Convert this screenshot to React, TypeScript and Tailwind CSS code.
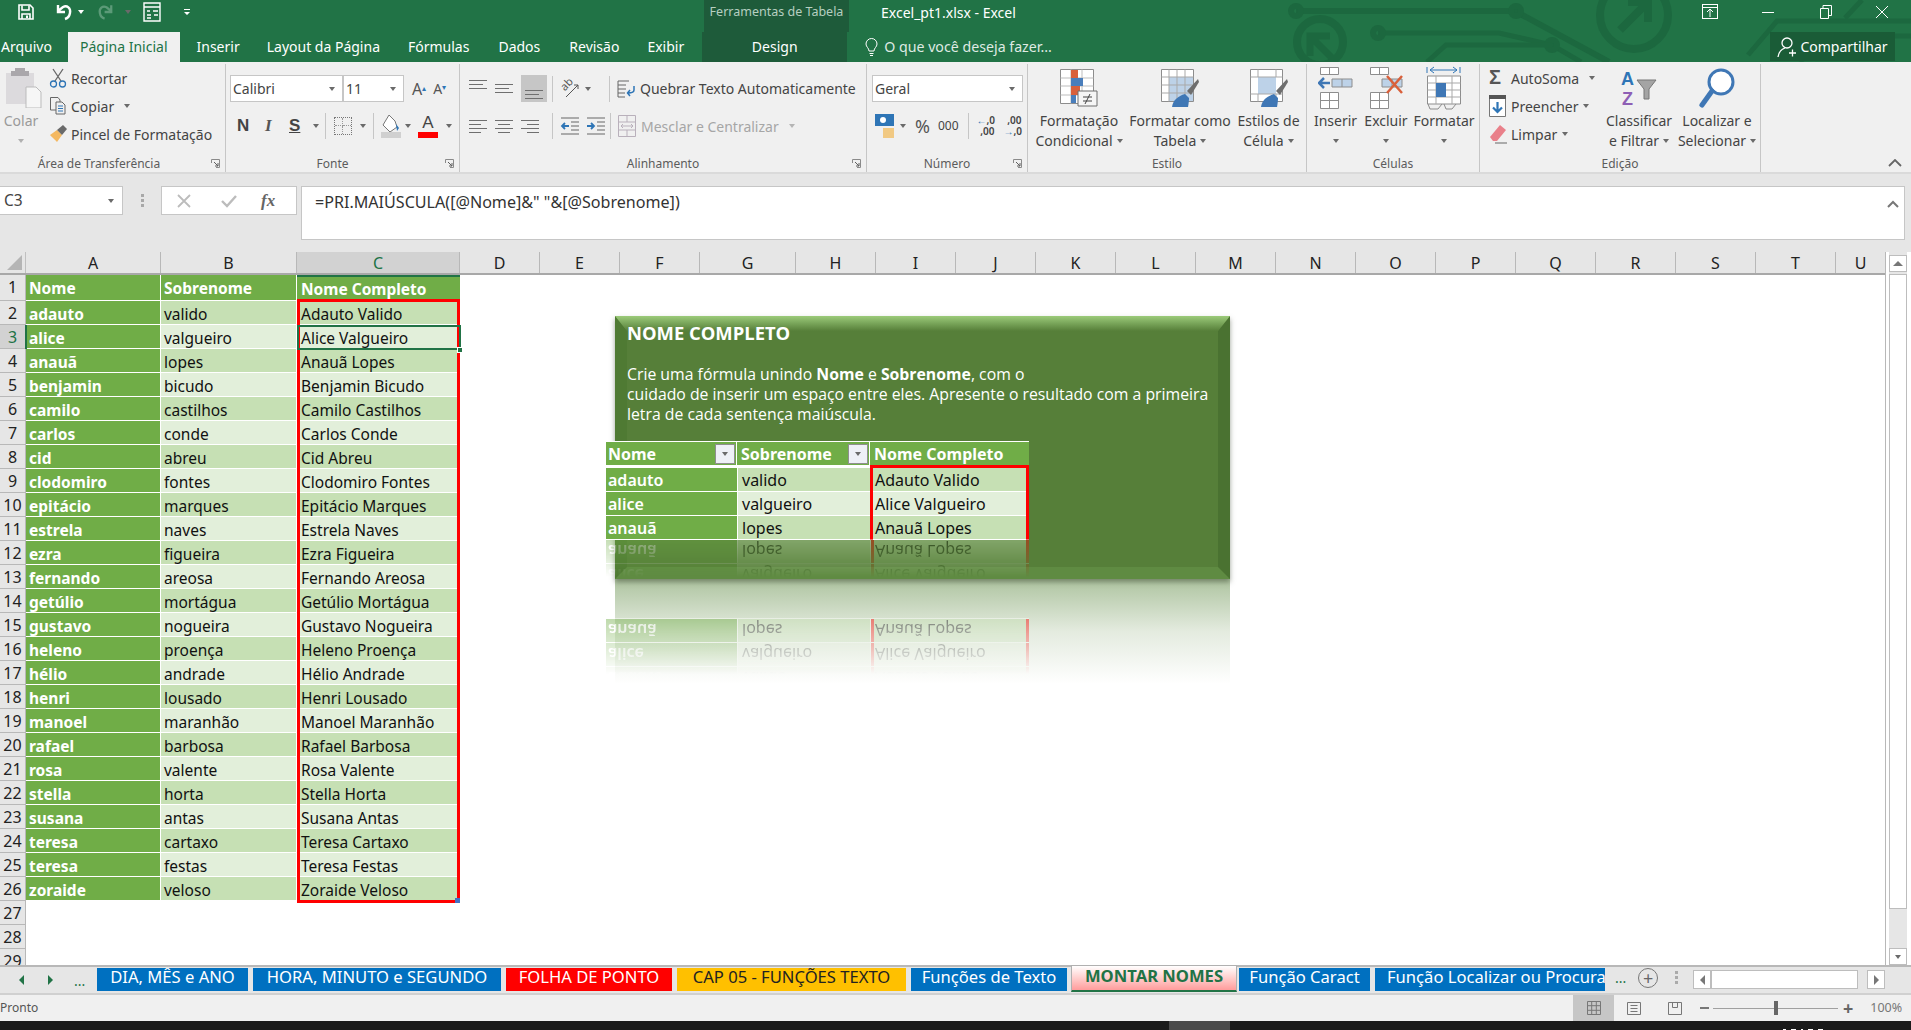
import { ReactNode } from "react";

const people = [
  ["adauto", "valido", "Adauto Valido"],
  ["alice", "valgueiro", "Alice Valgueiro"],
  ["anauã", "lopes", "Anauã Lopes"],
  ["benjamin", "bicudo", "Benjamin Bicudo"],
  ["camilo", "castilhos", "Camilo Castilhos"],
  ["carlos", "conde", "Carlos Conde"],
  ["cid", "abreu", "Cid Abreu"],
  ["clodomiro", "fontes", "Clodomiro Fontes"],
  ["epitácio", "marques", "Epitácio Marques"],
  ["estrela", "naves", "Estrela Naves"],
  ["ezra", "figueira", "Ezra Figueira"],
  ["fernando", "areosa", "Fernando Areosa"],
  ["getúlio", "mortágua", "Getúlio Mortágua"],
  ["gustavo", "nogueira", "Gustavo Nogueira"],
  ["heleno", "proença", "Heleno Proença"],
  ["hélio", "andrade", "Hélio Andrade"],
  ["henri", "lousado", "Henri Lousado"],
  ["manoel", "maranhão", "Manoel Maranhão"],
  ["rafael", "barbosa", "Rafael Barbosa"],
  ["rosa", "valente", "Rosa Valente"],
  ["stella", "horta", "Stella Horta"],
  ["susana", "antas", "Susana Antas"],
  ["teresa", "cartaxo", "Teresa Cartaxo"],
  ["teresa", "festas", "Teresa Festas"],
  ["zoraide", "veloso", "Zoraide Veloso"],
];

const columns: [string, number][] = [
  ["A", 135], ["B", 136], ["C", 163], ["D", 80], ["E", 80], ["F", 80], ["G", 96], ["H", 80], ["I", 80], ["J", 80], ["K", 80],
  ["L", 80], ["M", 80], ["N", 80], ["O", 80], ["P", 80], ["Q", 80], ["R", 80], ["S", 80], ["T", 80], ["U", 50],
];

function Caret({ className = "" }: { className?: string }) {
  return <span className={`inline-block w-0 h-0 border-l-[3.5px] border-r-[3.5px] border-t-[4px] border-l-transparent border-r-transparent border-t-[#6a6a6a] ${className}`} />;
}

function Sep({ className = "" }: { className?: string }) {
  return <div className={`w-px h-[26px] bg-[#c6c6c6] ${className}`} />;
}

function Launcher() {
  return (
    <svg width="9" height="9" viewBox="0 0 9 9" className="absolute right-[5px] bottom-[4px]">
      <path d="M.5 4V.5H8.5V8.5H5" fill="none" stroke="#8a8a8a" />
      <path d="M3 3 7 7M4 7H7V4" fill="none" stroke="#5e5e5e" />
    </svg>
  );
}

function Group({ label, width, labelClass = "", children }: { label: string; width: number; labelClass?: string; children: ReactNode }) {
  return (
    <div className="relative h-[108px] border-r border-[#c6c6c6] flex flex-col shrink-0" style={{ width }}>
      <div className="flex-1 min-h-0">{children}</div>
      <div className={`h-[18px] text-center text-[12px] leading-[20px] text-[#5c5c5c] ${labelClass}`}>{label}</div>
      {label !== "Estilo" && label !== "Células" && label !== "Edição" && <Launcher />}
    </div>
  );
}

function BigButton({ width, icon, lines }: { width: number; icon: ReactNode; lines: string[] }) {
  return (
    <div className="flex flex-col items-center text-[14px] leading-[20px] text-[#444] shrink-0 whitespace-nowrap" style={{ width }}>
      <div className="h-[47px] flex items-center justify-center">{icon}</div>
      <div className="h-[20px]">{lines[0]}</div>
      <div className="h-[20px] flex items-center justify-center gap-[4px]">
        {lines[1]}
        <Caret />
      </div>
    </div>
  );
}

function TabButton({ children, className = "px-[14px] text-white" }: { children: ReactNode; className?: string }) {
  return <div className={`h-[30px] leading-[29px] text-[14px] whitespace-nowrap ${className}`}>{children}</div>;
}

function Circuit() {
  return (
    <svg width="641" height="62" viewBox="0 0 641 62" className="absolute left-[1270px] top-0" fill="none" stroke="#1c683f" strokeWidth="6">
      <path d="M26 11H245L339 62" />
      <circle cx="26" cy="11" r="5" />
      <circle cx="246" cy="11" r="5" />
      <path d="M108 33H229L282 45 311 62" strokeWidth="5" />
      <circle cx="108" cy="33" r="5" />
      <circle cx="282" cy="45" r="5" />
      <path d="M157 62 176 45H282" strokeWidth="5" />
      <circle cx="364" cy="15" r="34" strokeWidth="8" />
      <path d="M350 30 378 2M358 2H378V22" strokeWidth="8" />
      <circle cx="50" cy="42" r="23" strokeWidth="8" />
      <path d="M66 62 42 38M40 56V36H60" strokeWidth="7" />
      <path d="M478 55 507 21H641M530 62 552 36H641M575 18 592 0" strokeWidth="5" />
    </svg>
  );
}

function TitleBar() {
  return (
    <div className="relative h-[62px] bg-[#217346] overflow-hidden text-white">
      <Circuit />
      <div className="relative h-[32px] flex items-center pb-[8px]">
        <div className="flex items-center pl-[18px] w-[704px]">
          <svg width="16" height="16" viewBox="0 0 16 16" fill="none" stroke="#fff" strokeWidth="1.6">
            <path d="M1 1H12L15 4V15H1Z" />
            <path d="M4 1.5V6H11V1.5M4 15V10H12V15" />
            <path d="M9 11.5V14" strokeWidth="2" />
          </svg>
          <svg width="20" height="18" viewBox="0 0 20 18" fill="none" stroke="#fff" strokeWidth="2.4" className="ml-[19px]">
            <path d="M5 2V9H12M5 8 10 4C14 2 18 5 17 10 16.500 13 15 15 12 16" />
          </svg>
          <Caret className="ml-[5px] border-t-white" />
          <svg width="19" height="18" viewBox="0 0 20 18" fill="none" stroke="#5c9a78" strokeWidth="2.4" className="ml-[13px]">
            <path d="M15 2V9H8M15 8 10 4C6 2 2 5 3 10 3.500 13 5 15 8 16" />
          </svg>
          <Caret className="ml-[9px] border-t-[#5c9a78]" />
          <svg width="18" height="20" viewBox="0 0 18 20" fill="none" stroke="#fff" strokeWidth="1.400" className="ml-[12px]">
            <path d="M1 1H17V19H1Z" />
            <path d="M1 5H17M4 9H7M10 9H15M4 13H8M11 13H15M4 16H8" />
          </svg>
          <svg width="8" height="8" viewBox="0 0 8 8" fill="#fff" className="ml-[22px]">
            <path d="M1 1H7V2H1ZM1 4H7L4 7Z" />
          </svg>
        </div>
        <div className="w-[145px] self-stretch -mb-[8px] bg-[#1e5b3a] text-center text-[12.500px] leading-[24px] text-[#b6cfc0] whitespace-nowrap">Ferramentas de Tabela</div>
        <div className="ml-[32px] text-[14px] whitespace-nowrap">Excel_pt1.xlsx - Excel</div>
        <div className="absolute left-[1702px] top-[4px] w-[16px] h-[15px] border border-white flex flex-col items-center">
          <div className="w-full h-[3px] border-b border-white" />
          <svg width="8" height="9" viewBox="0 0 8 9" fill="none" stroke="#fff"><path d="M4 9V1M1 4 4 1 7 4" /></svg>
        </div>
        <div className="absolute left-[1762px] top-[12px] w-[12px] h-px bg-white" />
        <svg width="12" height="14" viewBox="0 0 12 14" fill="none" stroke="#fff" className="absolute left-[1820px] top-[5px]">
          <path d="M.5 3.500H8.500V13.500H.5ZM3 3V.5H11.500V10.500H9" />
        </svg>
        <svg width="14" height="14" viewBox="0 0 14 14" stroke="#fff" className="absolute left-[1875px] top-[5px]"><path d="M1 1 13 13M13 1 1 13" /></svg>
      </div>
      <div className="relative h-[30px] flex items-end">
        <div className="text-[14px] leading-[29px] h-[30px] pl-[1px] w-[68px]">Arquivo</div>
        <TabButton className="px-[12px] mr-[4px] bg-[#f0f0f0] text-[#217346]">Página Inicial</TabButton>
        <TabButton className="px-[13px] text-white">Inserir</TabButton>
        <TabButton>Layout da Página</TabButton>
        <TabButton>Fórmulas</TabButton>
        <TabButton className="px-[15px] text-white">Dados</TabButton>
        <TabButton>Revisão</TabButton>
        <TabButton>Exibir</TabButton>
        <div className="ml-[4px] w-[145px] h-[30px] bg-[#1e5b3a] text-center text-[14px] leading-[29px]">Design</div>
        <div className="ml-[18px] h-[30px] flex items-center gap-[6px] text-[14.200px] text-[#dfeae3]">
          <svg width="13" height="19" viewBox="0 0 13 19" fill="none" stroke="#fff"><path d="M4 13C4 10 1 9 1 6A5.500 5.500 0 0 1 12 6C12 9 9 10 9 13ZM4.500 15.500H8.500M5 17.500H8" /></svg>
          O que você deseja fazer...
        </div>
        <div className="absolute left-[1770px] top-0 w-[125px] h-[29px] bg-[#1a5c37] flex items-center justify-center gap-[3px] text-[14px]">
          <svg width="20" height="22" viewBox="0 0 20 22" fill="none" stroke="#fff" strokeWidth="1.300"><circle cx="10" cy="7" r="5" /><path d="M1 21C2 15 5 13 8 12M12 17H19M15.500 13.500V20.500" /></svg>
          Compartilhar
        </div>
      </div>
    </div>
  );
}

function ClipboardGroup() {
  return (
    <Group label="Área de Transferência" width={226} labelClass="pr-[27px]">
      <div className="flex h-full text-[14px] text-[#444]">
        <div className="w-[46px] flex flex-col items-center pl-[2px] text-[#9a9a9a]">
          <svg width="36" height="40" viewBox="0 0 36 40" className="mt-[4px]">
            <path d="M0 5H28V36H0Z" fill="#dcdadd" />
            <path d="M9 0H19V3H23V8H5V3H9Z" fill="#aaa7ab" />
            <path d="M20 19H30L35 24V40H20Z" fill="#f6f6f6" stroke="#bbb" />
          </svg>
          <div className="h-[20px] mt-[3px] leading-[20px] -ml-[6px]">Colar</div>
          <Caret className="mt-[8px] border-t-[#b0b0b0] -ml-[6px]" />
        </div>
        <div className="flex flex-col">
          {["Recortar", "Copiar", "Pincel de Formatação"].map((t, i) => (
            <div key={t} className="h-[28px] flex items-center whitespace-nowrap ml-[3px]">
              {i === 0 && (
                <svg width="18" height="20" viewBox="0 0 18 20" fill="none" stroke="#666" strokeWidth="1.300">
                  <path d="M4 1 12 13M14 1 6 13" />
                  <circle cx="4.500" cy="16" r="3" stroke="#2e75b6" />
                  <circle cx="13.500" cy="16" r="3" stroke="#2e75b6" />
                </svg>
              )}
              {i === 1 && (
                <svg width="18" height="20" viewBox="0 0 18 20" fill="none" stroke="#666">
                  <path d="M1.500 1.500H9L11 4V14H1.500Z" />
                  <path d="M7 6H13L16 9V18H7Z" fill="#f0f0f0" />
                  <path d="M9 10H14M9 12.500H14M9 15H14" stroke="#2e75b6" />
                </svg>
              )}
              {i === 2 && (
                <svg width="18" height="18" viewBox="0 0 18 18">
                  <path d="M1 10 8 5 13 10 8 17C6 15 3 12 1 10Z" fill="#f4b860" />
                  <path d="M8 5 14 0 18 4 13 10Z" fill="#6a6a6a" />
                </svg>
              )}
              <span className="ml-[4px]">{t}</span>
              {i === 1 && <Caret className="ml-[10px]" />}
            </div>
          ))}
        </div>
      </div>
    </Group>
  );
}

function Select({ text, width }: { text: string; width: number }) {
  return (
    <div className="h-[27px] bg-white border border-[#c6c6c6] flex items-center justify-between pl-[2px] pr-[7px] text-[14px] text-[#444] shrink-0" style={{ width }}>
      {text}
      <Caret />
    </div>
  );
}

function Lines({ widths, align = "left" }: { widths: number[]; align?: "left" | "center" | "right" }) {
  return (
    <div className={`w-[18px] flex flex-col gap-[3px] ${align === "center" ? "items-center" : align === "right" ? "items-end" : "items-start"}`}>
      {widths.map((w, i) => (
        <div key={i} className="h-px bg-[#6f6f6f]" style={{ width: w }} />
      ))}
    </div>
  );
}

function FontGroup() {
  return (
    <Group label="Fonte" width={234} labelClass="pr-[20px]">
      <div className="pt-[11px] pl-[4px]">
        <div className="flex items-center">
          <Select text="Calibri" width={113} />
          <Select text="11" width={61} />
          <span className="ml-[8px] text-[16px] text-[#555] leading-none">A<sup className="text-[#2e75b6] text-[8px]">▴</sup></span>
          <span className="ml-[7px] text-[14px] text-[#555] leading-none">A<sup className="text-[#2e75b6] text-[8px]">▾</sup></span>
        </div>
        <div className="flex items-center h-[26px] mt-[11px] text-[#444]">
          <span className="ml-[7px] w-[28px] text-[17px] font-bold font-['Liberation_Sans',sans-serif]">N</span>
          <span className="w-[24px] text-[17px] italic font-bold text-[#555] font-['Liberation_Serif',serif]">I</span>
          <span className="w-[24px] text-[17px] font-bold underline font-['Liberation_Sans',sans-serif]">S</span>
          <Caret />
          <Sep className="ml-[6px]" />
          <div className="ml-[8px] w-[18px] h-[18px] border border-dotted border-[#777] grid grid-cols-2 grid-rows-2">
            <div className="border-r border-b border-dotted border-[#999]" />
            <div className="border-b border-dotted border-[#999]" />
            <div className="border-r border-dotted border-[#999]" />
            <div />
          </div>
          <Caret className="ml-[8px]" />
          <Sep className="ml-[7px]" />
          <svg width="20" height="24" viewBox="0 0 20 24" className="ml-[7px]">
            <path d="M8 1 14 7 16 13 9 18 2 11Z" fill="#fff" stroke="#777" />
            <path d="M15 10 18 14 16 17Z" fill="#2e75b6" />
            <path d="M0 18H20V24H0Z" fill="#d0d0d0" />
          </svg>
          <Caret className="ml-[4px]" />
          <div className="ml-[7px] w-[20px] flex flex-col items-center">
            <span className="text-[17px] leading-[18px] text-[#444] font-['Liberation_Sans',sans-serif]">A</span>
            <div className="w-[20px] h-[6px] bg-[#ff0000]" />
          </div>
          <Caret className="ml-[8px]" />
        </div>
      </div>
    </Group>
  );
}

function AlignGroup() {
  return (
    <Group label="Alinhamento" width={407}>
      <div className="pt-[11px] pl-[9px] text-[14px]">
        <div className="h-[27px] flex items-center">
          <div className="w-[26px] h-[27px] flex justify-start items-start pt-[5px]"><Lines widths={[18, 14, 18]} /></div>
          <div className="w-[26px] h-[27px] flex justify-start items-center"><Lines widths={[18, 14, 18]} /></div>
          <div className="w-[26px] h-[27px] bg-[#c6c6c6] flex justify-center items-end pb-[3px]"><Lines widths={[18, 14, 18]} /></div>
          <Sep className="ml-[5px]" />
          <div className="relative ml-[6px] w-[21px] h-[21px]">
            <span className="absolute left-[1px] top-[-1px] text-[11px] leading-[14px] text-[#555] -rotate-45">ab</span>
            <svg width="21" height="21" viewBox="0 0 21 21" fill="none" stroke="#555" className="absolute left-0 top-0">
              <path d="M7 19 19 7M15 7H19V11" />
            </svg>
          </div>
          <Caret className="ml-[5px]" />
          <Sep className="ml-[18px]" />
          <svg width="20" height="20" viewBox="0 0 20 20" fill="none" stroke="#666" className="ml-[7px]">
            <path d="M1 2H12M1 6H9M1 10H9M1 14H8M1 18H8M1 2V18" />
            <path d="M17 7V11C17 13 15 14 11 14M13 11 10.500 14 13 17" stroke="#2e75b6" strokeWidth="1.500" />
          </svg>
          <span className="ml-[3px] text-[#444] whitespace-nowrap">Quebrar Texto Automaticamente</span>
        </div>
        <div className="h-[26px] mt-[11px] flex items-center">
          <div className="w-[26px]"><Lines widths={[18, 12, 18, 12]} /></div>
          <div className="w-[26px]"><Lines widths={[18, 12, 18, 12]} align="center" /></div>
          <div className="w-[26px]"><Lines widths={[18, 12, 18, 12]} align="right" /></div>
          <Sep className="ml-[5px]" />
          <svg width="20" height="18" viewBox="0 0 20 18" fill="none" stroke="#666" className="ml-[7px]">
            <path d="M1 1H19M11 5H19M11 9H19M11 13H19M1 17H19" />
            <path d="M9 9H2M5 6 2 9 5 12" stroke="#2e75b6" strokeWidth="1.800" />
          </svg>
          <svg width="20" height="18" viewBox="0 0 20 18" fill="none" stroke="#666" className="ml-[6px]">
            <path d="M1 1H19M11 5H19M11 9H19M11 13H19M1 17H19" />
            <path d="M1 9H8M5 6 8 9 5 12" stroke="#2e75b6" strokeWidth="1.800" />
          </svg>
          <Sep className="ml-[4px]" />
          <svg width="18" height="22" viewBox="0 0 18 22" fill="none" stroke="#b9b0bb" className="ml-[7px]">
            <path d="M.5.5H17.500V21.500H.5ZM.5 7H17.500M.5 15H17.500M9 .5V7M9 15V21.500" />
            <path d="M3 11H15M5 9 3 11 5 13M13 9 15 11 13 13" />
          </svg>
          <span className="ml-[5px] text-[#a6a6a6] whitespace-nowrap">Mesclar e Centralizar</span>
          <Caret className="ml-[10px] border-t-[#b5b5b5]" />
        </div>
      </div>
    </Group>
  );
}

function NumberGroup() {
  return (
    <Group label="Número" width={161}>
      <div className="pt-[11px] pl-[5px] text-[#444]">
        <Select text="Geral" width={151} />
        <div className="h-[26px] mt-[11px] flex items-center">
          <svg width="20" height="24" viewBox="0 0 20 24" className="ml-[3px]">
            <path d="M0 0H19V12H0Z" fill="#2e75b6" />
            <circle cx="8" cy="6" r="3" fill="#fff" />
            <path d="M8 14H19V24H8Z" fill="#f1c983" />
          </svg>
          <Caret className="ml-[5px]" />
          <span className="ml-[9px] text-[18px] text-[#555] leading-none">%</span>
          <span className="ml-[8px] text-[12px] text-[#444]">000</span>
          <Sep className="ml-[9px]" />
          <div className="ml-[8px] w-[18px] text-[10px] leading-[11px] text-[#444] font-semibold text-right">
            <span className="text-[#2e75b6]">←</span>,0<br />,00
          </div>
          <div className="ml-[9px] w-[18px] text-[10px] leading-[11px] text-[#444] font-semibold text-right">
            ,00<br /><span className="text-[#2e75b6]">→</span>,0
          </div>
        </div>
      </div>
    </Group>
  );
}

function StyleIcon({ kind }: { kind: "cond" | "table" | "cell" }) {
  if (kind === "cond")
    return (
      <svg width="38" height="38" viewBox="0 0 38 38">
        <path d="M.5.5H33.500V34.500H.5Z" fill="#fff" stroke="#8d8d8d" />
        <path d="M11 .5V34.500M22 .5V34.500M.5 9H33.500M.5 17H33.500M.5 26H33.500" stroke="#bdbdbd" />
        <path d="M11 1H18V9H11ZM11 17H20V26H11Z" fill="#d9603b" />
        <path d="M11 9H23V17H11ZM11 26H16V34H11Z" fill="#4a7ebb" />
        <path d="M18 22H37V37H18Z" fill="#f6f6f6" stroke="#6f6f6f" />
        <path d="M23 28H32M23 32H32M30 25 25 35" stroke="#444" />
      </svg>
    );
  if (kind === "table")
    return (
      <svg width="38" height="38" viewBox="0 0 38 38">
        <path d="M.5.5H32.500V32.500H.5Z" fill="#fff" stroke="#8d8d8d" />
        <path d="M8 8H32V32H8Z" fill="#bdd2e8" />
        <path d="M8 .5V32.500M16 .5V32.500M24 .5V32.500M.5 8H32.500M.5 16H32.500M.5 24H32.500" stroke="#a9a9a9" />
        <path d="M26 22 37 10 38 13 30 26Z" fill="#6e6e6e" />
        <path d="M11 38C12 31 17 27 24 25L28 29C28 33 27 38 27 38Z" fill="#3f77b5" />
      </svg>
    );
  return (
    <svg width="38" height="38" viewBox="0 0 38 38">
      <path d="M.5.5H32.500V32.500H.5Z" fill="#fff" stroke="#8d8d8d" />
      <path d="M8 8H26V25H8Z" fill="#bdd2e8" />
      <path d="M8 .5V8M26 .5V8M8 25V32.500M26 25V32.500M.5 8H32.500M.5 25H32.500" stroke="#a9a9a9" />
      <path d="M26 22 37 10 38 13 30 26Z" fill="#6e6e6e" />
      <path d="M11 38C12 31 17 27 24 25L28 29C28 33 27 38 27 38Z" fill="#3f77b5" />
    </svg>
  );
}

function CellsIcon({ kind }: { kind: "ins" | "del" | "fmt" }) {
  if (kind === "fmt")
    return (
      <svg width="36" height="44" viewBox="0 0 36 44" fill="none">
        <path d="M1 1V7M34 1V7" stroke="#2e75b6" />
        <path d="M4 4H31M4 4 8 1M4 4 8 7M31 4 27 1M31 4 27 7" stroke="#2e75b6" />
        <path d="M1.500 10H34.500V38H1.500Z" fill="#fff" stroke="#8d8d8d" />
        <path d="M10 10V38M26 10V38M1.500 17H34.500M1.500 24H34.500M1.500 31H34.500" stroke="#a9a9a9" />
        <path d="M10 17H20V31H10Z" fill="#3f77b5" />
        <path d="M2 38 4 43H12L16 38M18 38 20 43H26L30 38" stroke="#8d8d8d" />
      </svg>
    );
  return (
    <svg width="36" height="44" viewBox="0 0 36 44" fill="none">
      <path d="M2.500 1.500H20.500V8.500H2.500ZM11.500 1.500V8.500" stroke="#8d8d8d" fill="#fff" />
      <path d="M2.500 26.500H20.500V42.500H2.500ZM2.500 34.500H20.500M11.500 26.500V42.500" stroke="#8d8d8d" fill="#fff" />
      <path d="M14 13H34V21H14ZM24 13V21" stroke="#8d8d8d" fill="#bdd2e8" />
      {kind === "ins" ? (
        <path d="M12 17H1M6 12 1 17 6 22" stroke="#3f77b5" strokeWidth="2.500" />
      ) : (
        <path d="M19 10 34 27M34 10 19 27" stroke="#d9603b" strokeWidth="2.500" />
      )}
    </svg>
  );
}

function EditRow({ icon, label, caretClass = "ml-[5px]" }: { icon: ReactNode; label: string; caretClass?: string }) {
  return (
    <div className="h-[28px] flex items-center text-[14px] text-[#444] whitespace-nowrap">
      <div className="w-[21px]">{icon}</div>
      <span className="ml-[1px]">{label}</span>
      <Caret className={caretClass} />
    </div>
  );
}

function Ribbon() {
  return (
    <div className="h-[112px] bg-[#f0f0f0] border-b-2 border-[#dadada] flex items-start pt-[2px] relative">
      <ClipboardGroup />
      <FontGroup />
      <AlignGroup />
      <NumberGroup />
      <Group label="Estilo" width={279}>
        <div className="flex">
          <BigButton width={102} icon={<StyleIcon kind="cond" />} lines={["Formatação", "Condicional"]} />
          <BigButton width={100} icon={<StyleIcon kind="table" />} lines={["Formatar como", "Tabela"]} />
          <BigButton width={77} icon={<StyleIcon kind="cell" />} lines={["Estilos de", "Célula"]} />
        </div>
      </Group>
      <Group label="Células" width={173}>
        <div className="flex pl-[2px] text-[14px] text-[#444]">
          {[["Inserir", "ins", 53], ["Excluir", "del", 48], ["Formatar", "fmt", 68]].map(([t, k, w]) => (
            <div key={t as string} className="flex flex-col items-center" style={{ width: w as number }}>
              <div className="h-[47px] flex items-center justify-center"><CellsIcon kind={k as "ins" | "del" | "fmt"} /></div>
              <div className="h-[20px] leading-[20px]">{t}</div>
              <Caret className="mt-[8px]" />
            </div>
          ))}
        </div>
      </Group>
      <Group label="Edição" width={281}>
        <div className="flex pl-[9px]">
          <div className="w-[111px]">
            <EditRow label="AutoSoma" caretClass="ml-[10px]" icon={<span className="text-[20px] leading-none font-bold text-[#555] font-['Liberation_Sans',sans-serif]">Σ</span>} />
            <EditRow label="Preencher" icon={
              <svg width="17" height="22" viewBox="0 0 17 22"><path d="M.5.5H16.500V21.500H.5Z" fill="#fff" stroke="#777" /><path d="M0 0H17V4H0Z" fill="#555" /><path d="M8.500 7V17M4 12.500 8.500 17 13 12.500" fill="none" stroke="#2e75b6" strokeWidth="2.200" /></svg>
            } />
            <EditRow label="Limpar" icon={
              <svg width="18" height="20" viewBox="0 0 18 20"><path d="M1 13 11 1 17 6 8 17H4Z" fill="#e9808a" /><path d="M6 19H18" stroke="#666" /></svg>
            } />
          </div>
          <div className="w-[78px] flex flex-col items-center text-[14px] leading-[20px] text-[#444] whitespace-nowrap">
            <div className="h-[47px] flex items-center">
              <svg width="36" height="38" viewBox="0 0 36 38">
                <text x="0" y="16" fontSize="18" fontWeight="700" fill="#2e75b6" fontFamily="Liberation Sans">A</text>
                <text x="1" y="36" fontSize="18" fontWeight="700" fill="#8e5fb5" fontFamily="Liberation Sans">Z</text>
                <path d="M16 11H35L28 20V30H23V20Z" fill="#a4a4a4" stroke="#777" />
              </svg>
            </div>
            <div>Classificar</div>
            <div className="flex items-center gap-[4px]">e Filtrar<Caret /></div>
          </div>
          <div className="w-[78px] flex flex-col items-center text-[14px] leading-[20px] text-[#444] whitespace-nowrap">
            <div className="h-[47px] flex items-center">
              <svg width="36" height="42" viewBox="0 0 36 42" fill="none" stroke="#3f77b5">
                <circle cx="22" cy="15" r="12" strokeWidth="3" fill="#fff" />
                <path d="M13 24 3 38" strokeWidth="5" strokeLinecap="round" />
              </svg>
            </div>
            <div>Localizar e</div>
            <div className="flex items-center gap-[4px]">Selecionar<Caret /></div>
          </div>
        </div>
      </Group>
      <svg width="14" height="8" viewBox="0 0 14 8" fill="none" stroke="#666" strokeWidth="1.800" className="absolute left-[1888px] top-[97px]"><path d="M1 7 7 1 13 7" /></svg>
    </div>
  );
}

function FormulaBar() {
  return (
    <div className="h-[78px] bg-[#e6e6e6] flex items-start pt-[12px] pr-[6px]">
      <div className="w-[123px] h-[29px] bg-white border border-l-0 border-[#c6c6c6] flex items-center justify-between pl-[4px] pr-[8px] text-[15.500px] text-[#444] shrink-0">
        C3
        <Caret />
      </div>
      <div className="w-[38px] h-[29px] flex flex-col items-center justify-center gap-[2px] shrink-0">
        <div className="w-[3px] h-[3px] bg-[#a8a8a8]" />
        <div className="w-[3px] h-[3px] bg-[#a8a8a8]" />
        <div className="w-[3px] h-[3px] bg-[#a8a8a8]" />
      </div>
      <div className="w-[136px] h-[29px] bg-white border border-[#c6c6c6] flex items-center shrink-0">
        <svg width="14" height="14" viewBox="0 0 14 14" stroke="#bcbcbc" strokeWidth="1.800" className="ml-[15px]"><path d="M1 1 13 13M13 1 1 13" /></svg>
        <svg width="16" height="14" viewBox="0 0 16 14" fill="none" stroke="#bcbcbc" strokeWidth="2.400" className="ml-[30px]"><path d="M1 7 6 12 15 2" /></svg>
        <span className="ml-[24px] text-[17px] italic font-bold text-[#666] font-['Liberation_Serif',serif]">fx</span>
      </div>
      <div className="ml-[4px] flex-1 h-[54px] bg-white border border-[#c6c6c6] flex items-start justify-between pl-[13px] pr-[5px] pt-[3px] text-[16.100px] text-[#333]">
        <span>=PRI.MAIÚSCULA([@Nome]&amp;" "&amp;[@Sobrenome])</span>
        <svg width="12" height="8" viewBox="0 0 12 8" fill="none" stroke="#777" strokeWidth="2" className="mt-[10px]"><path d="M1 7 6 2 11 7" /></svg>
      </div>
    </div>
  );
}

function Row({ n, cells, selected, head }: { n: number; cells: string[]; selected?: boolean; head?: boolean }) {
  const even = n % 2 === 0;
  const rowBg = even ? "bg-[#c6e0b4]" : "bg-[#e2efda]";
  return (
    <div className={`flex shrink-0 ${head ? "h-[26px]" : "h-[24px]"}`}>
      <div className={`w-[26px] shrink-0 border-r border-b border-[#b8b8b8] text-center text-[16px] leading-[25px] ${selected ? "bg-[#d2d2d2] text-[#217346]" : "bg-[#e6e6e6] text-[#222]"}`}>{n}</div>
      <div className="w-[135px] shrink-0 pl-[3px] bg-[#70ad47] text-white font-bold text-[15.500px] leading-[26px] border-r border-b border-white">{cells[0]}</div>
      <div className={`w-[136px] shrink-0 pl-[3px] text-[15.500px] leading-[26px] border-r border-b border-white ${head ? "bg-[#70ad47] text-white font-bold" : `${rowBg} text-[#111]`}`}>{cells[1]}</div>
      <div className={`w-[163px] shrink-0 pl-[4px] text-[15.500px] ${head ? "bg-[#70ad47] text-white font-bold border-t-2 border-[#217346] leading-[24px]" : `${rowBg} text-[#111] leading-[26px] border-b border-white`}`}>{cells[2]}</div>
    </div>
  );
}

function MiniTable() {
  return (
    <div className="absolute left-[606px] top-[189px] w-[423px] text-[16px] leading-[24px]">
      <div className="h-[24px] bg-[#70ad47] text-white font-bold flex border-t border-white whitespace-nowrap">
        <div className="w-[131px] pl-[2px] flex items-center justify-between border-r border-white">
          Nome
          <span className="w-[20px] h-[20px] bg-[#eef0f6] border border-[#8f8f8f] flex items-center justify-center mr-px"><Caret /></span>
        </div>
        <div className="w-[133px] pl-[4px] flex items-center justify-between border-r border-white">
          Sobrenome
          <span className="w-[20px] h-[20px] bg-[#eef0f6] border border-[#8f8f8f] flex items-center justify-center mr-px"><Caret /></span>
        </div>
        <div className="w-[159px] pl-[4px] flex items-center">Nome Completo</div>
      </div>
      <div className="h-[3px] bg-white" />
      <div className="relative">
        {[0, 1, 2].map(i => (
          <div key={i} className="flex h-[24px] border-b border-white">
            <div className="w-[132px] bg-[#70ad47] text-white font-semibold pl-[2px] border-r border-white">{people[i][0]}</div>
            <div className={`w-[133px] pl-[4px] text-[#111] border-r border-white ${i === 1 ? "bg-[#e2efda]" : "bg-[#c6e0b4]"}`}>{people[i][1]}</div>
            <div className={`w-[158px] pl-[4px] text-[#111] ${i === 1 ? "bg-[#e2efda]" : "bg-[#c6e0b4]"}`}>{people[i][2]}</div>
          </div>
        ))}
        <div className="absolute left-[264px] right-0 -top-[3px] bottom-0 border-[3px] border-b-0 border-[#ff0000]" />
      </div>
    </div>
  );
}

function Reflection({ className, rows }: { className: string; rows: number[] }) {
  return (
    <div className={`absolute w-[423px] text-[16px] leading-[24px] overflow-hidden ${className}`}>
      {rows.map(i => (
        <div key={i} className="flex h-[24px] border-b border-white -scale-y-100">
          <div className="w-[132px] bg-[#70ad47] text-white font-semibold pl-[2px] border-r border-white">{people[i][0]}</div>
          <div className={`w-[133px] pl-[4px] text-[#111] border-r border-white ${i === 1 ? "bg-[#e2efda]" : "bg-[#c6e0b4]"}`}>{people[i][1]}</div>
          <div className={`w-[158px] pl-[1px] text-[#111] border-x-[3px] border-[#ff0000] ${i === 1 ? "bg-[#e2efda]" : "bg-[#c6e0b4]"}`}>{people[i][2]}</div>
        </div>
      ))}
    </div>
  );
}

function InfoCard() {
  return (
    <div className="absolute left-0 top-0 w-full h-full pointer-events-none">
      {/* reflection of the shape under it */}
      <div className="absolute left-[615px] top-[327px] w-[615px] h-[105px] bg-gradient-to-b from-[#aec4a0] via-[#e4ebdf] to-transparent" />
      <div className="absolute left-[615px] top-[64px] w-[615px] h-[263px] bg-[#567f39] border-t-[15px] border-x-[12px] border-b-[12px] border-t-[#567f39] border-l-[#4f7a33] border-r-[#4a7231] border-b-[#5f8b42] shadow-[0_3px_5px_rgba(60,70,50,0.5)]">
        <div className="relative z-10 -mt-[10px] text-white text-[15.800px] leading-[20px] font-['Open_Sans',sans-serif]">
          <div className="text-[18.400px] font-bold leading-[24px] mb-[19px] whitespace-nowrap">NOME COMPLETO</div>
          <div className="whitespace-nowrap">Crie uma fórmula unindo <b>Nome</b> e <b>Sobrenome</b>, com o</div>
          <div className="whitespace-nowrap">cuidado de inserir um espaço entre eles. Apresente o resultado com a primeira</div>
          <div className="whitespace-nowrap">letra de cada sentença maiúscula.</div>
        </div>
      </div>
      {/* top bevel highlight */}
      <div className="absolute left-[615px] top-[64px] w-[615px] h-[15px] bg-gradient-to-b from-[#9ccb7a] to-[#567f39] [clip-path:polygon(0_0,100%_0,calc(100%-12px)_100%,12px_100%)]" />
      <MiniTable />
      <Reflection className="left-[606px] top-[287px] h-[38px] opacity-50 [mask-image:linear-gradient(to_bottom,rgba(0,0,0,.8),rgba(0,0,0,0))]" rows={[2, 1]} />
      <Reflection className="left-[606px] top-[366px] h-[56px] opacity-50 [mask-image:linear-gradient(to_bottom,rgba(0,0,0,.9),rgba(0,0,0,0))]" rows={[2, 1, 0]} />
    </div>
  );
}

function Sheet() {
  return (
    <div className="h-[713px] bg-white flex overflow-hidden shrink-0">
      <div className="w-[1886px] relative border-r border-[#b8b8b8] overflow-hidden">
        <div className="h-[23px] bg-[#e6e6e6] flex border-b-2 border-[#a8a8a8]">
          <div className="w-[26px] shrink-0 relative border-r border-[#c0c0c0]">
            <div className="absolute right-[3px] bottom-[3px] w-0 h-0 border-b-[15px] border-l-[15px] border-b-[#b5b5b5] border-l-transparent" />
          </div>
          {columns.map(([name, w]) => (
            <div key={name} className={`shrink-0 text-center text-[16px] leading-[23px] border-r border-[#b8b8b8] ${name === "C" ? "bg-[#d2d2d2] text-[#217346]" : "text-[#222]"}`} style={{ width: w }}>{name}</div>
          ))}
        </div>
        <div className="flex flex-col">
          <Row n={1} head cells={["Nome", "Sobrenome", "Nome Completo"]} />
          {people.map((p, i) => (
            <Row key={i} n={i + 2} cells={p} selected={i === 1} />
          ))}
          {[27, 28, 29].map(n => (
            <div key={n} className="h-[24px] w-[26px] bg-[#e6e6e6] border-r border-b border-[#b8b8b8] text-center text-[16px] leading-[25px] text-[#222]">{n}</div>
          ))}
        </div>
        {/* red box round the C column, drawn on the sheet */}
        <div className="absolute left-[297px] top-[47px] w-[163px] h-[604px] border-[3px] border-[#ff0000]" />
        <div className="absolute left-[297px] top-[73px] w-[164px] h-[25px] border-2 border-[#217346]" />
        <div className="absolute left-[457px] top-[95px] w-[6px] h-[6px] bg-[#217346] border border-white" />
        <div className="absolute left-[455px] top-[646px] w-[5px] h-[5px] bg-[#4472c4]" />
        <div className="absolute left-[25px] top-[73px] w-[2px] h-[24px] bg-[#217346]" />
        <InfoCard />
      </div>
      <div className="ml-[3px] w-[18px] flex flex-col pt-[3px] bg-[#e6e6e6]">
        <div className="h-[17px] bg-white border border-[#bdbdbd] flex items-center justify-center">
          <div className="w-0 h-0 border-l-[5px] border-r-[5px] border-b-[5px] border-l-transparent border-r-transparent border-b-[#777]" />
        </div>
        <div className="mt-[2px] h-[635px] bg-white border border-[#bdbdbd]" />
        <div className="mt-auto h-[17px] bg-white border border-[#bdbdbd] flex items-center justify-center">
          <Caret />
        </div>
      </div>
    </div>
  );
}

function SheetTab({ width, color, text, children }: { width: number; color: string; text: string; children: ReactNode }) {
  return (
    <div className={`h-[23px] mr-[5px] shrink-0 overflow-hidden text-center text-[16.600px] leading-[17px] whitespace-nowrap ${color} ${text}`} style={{ width }}>
      {children}
    </div>
  );
}

function TabBar() {
  return (
    <div className="h-[30px] bg-[#e6e6e6] border-t-2 border-[#b8b8b8] border-b-2 border-b-[#d0d0d0] flex items-start pt-[1px] relative">
      <div className="w-[97px] h-[24px] flex items-center shrink-0 text-[#217346]">
        <div className="ml-[19px] w-0 h-0 border-y-[5px] border-r-[5px] border-y-transparent border-r-[#217346]" />
        <div className="ml-[24px] w-0 h-0 border-y-[5px] border-l-[5px] border-y-transparent border-l-[#217346]" />
        <span className="ml-[21px] text-[14px]">...</span>
      </div>
      <SheetTab width={151} color="bg-[#0070c0]" text="text-white">DIA, MÊS e ANO</SheetTab>
      <SheetTab width={248} color="bg-[#0070c0]" text="text-white">HORA, MINUTO e SEGUNDO</SheetTab>
      <SheetTab width={166} color="bg-[#ff0000]" text="text-white">FOLHA DE PONTO</SheetTab>
      <SheetTab width={229} color="bg-[#ffc000]" text="text-[#222]">CAP 05 - FUNÇÕES TEXTO</SheetTab>
      <SheetTab width={156} color="bg-[#0070c0]" text="text-white">Funções de Texto</SheetTab>
      <div className="-mt-[3px] -ml-[1px] mr-[2px] w-[166px] h-[27px] shrink-0 border-x border-t border-[#b0b0b0] border-b-2 border-b-[#217346] bg-gradient-to-b from-white to-[#ff9c9c] text-center text-[16.600px] leading-[20px] font-bold text-[#217346] whitespace-nowrap">MONTAR NOMES</div>
      <SheetTab width={131} color="bg-[#0070c0]" text="text-white">Função Caract</SheetTab>
      <SheetTab width={230} color="bg-[#0070c0]" text="text-white"><span className="block text-left pl-[12px]">Função Localizar ou Procurar</span></SheetTab>
      <span className="ml-[5px] text-[14px] leading-[20px] text-[#217346]">...</span>
      <div className="ml-[12px] w-[20px] h-[20px] rounded-full border border-[#777] flex items-center justify-center text-[#666] text-[18px] leading-none">+</div>
      <div className="ml-[17px] mt-[3px] flex flex-col gap-[2px]">
        <div className="w-[3px] h-[3px] bg-[#aaa]" />
        <div className="w-[3px] h-[3px] bg-[#aaa]" />
        <div className="w-[3px] h-[3px] bg-[#aaa]" />
      </div>
      <div className="ml-[15px] w-[18px] h-[19px] mt-[2px] bg-white border border-[#bdbdbd] flex items-center justify-center">
        <div className="w-0 h-0 border-y-[5px] border-r-[5px] border-y-transparent border-r-[#777]" />
      </div>
      <div className="w-[147px] h-[19px] mt-[2px] bg-white border border-[#bdbdbd]" />
      <div className="ml-[9px] w-[18px] h-[19px] mt-[2px] bg-white border border-[#bdbdbd] flex items-center justify-center">
        <div className="w-0 h-0 border-y-[5px] border-l-[5px] border-y-transparent border-l-[#777]" />
      </div>
    </div>
  );
}

function StatusBar() {
  return (
    <div className="h-[26px] bg-[#f0f0f0] flex items-center text-[12px] text-[#555]">
      <span className="w-[1573px] shrink-0">Pronto</span>
      <div className="w-[41px] h-full bg-[#c6c6c6] flex items-center justify-center">
        <svg width="14" height="14" viewBox="0 0 14 14" fill="none" stroke="#777"><path d="M.5.5H13.500V13.500H.5ZM4.700.5V13.500M9.300.5V13.500M.5 4.700H13.500M.5 9.300H13.500" /></svg>
      </div>
      <div className="ml-[13px] w-[14px]">
        <svg width="14" height="13" viewBox="0 0 14 13" fill="none" stroke="#777"><path d="M.5.5H13.500V12.500H.5ZM3.500 3.500H10.500M3.500 6.500H10.500M3.500 9.500H10.500" /></svg>
      </div>
      <div className="ml-[27px] w-[14px]">
        <svg width="14" height="13" viewBox="0 0 14 13" fill="none" stroke="#777"><path d="M.5.5H13.500V12.500H.5ZM4.500.5V5.500H9.500V.5" /></svg>
      </div>
      <div className="ml-[18px] w-[9px] h-[2px] bg-[#777]" />
      <div className="ml-[4px] w-[125px] h-px bg-[#a0a0a0] relative">
        <div className="absolute left-[61px] -top-[7px] w-[4px] h-[14px] bg-[#666]" />
      </div>
      <div className="ml-[5px] text-[#666] text-[18px] leading-none font-bold">+</div>
      <span className="ml-[17px] text-[12.500px] text-[#777]">100%</span>
    </div>
  );
}

export default function App() {
  return (
    <div className="w-[1911px] h-[1030px] overflow-hidden flex flex-col bg-white font-['Noto_Sans',sans-serif]">
      <TitleBar />
      <Ribbon />
      <FormulaBar />
      <Sheet />
      <TabBar />
      <StatusBar />
      <div className="flex-1 bg-[#1b1b1b] relative">
        <div className="absolute left-[1169px] top-0 w-[61px] h-full bg-[#4a4a4a]" />
        {/* top of the clock digits, cut off by the photo */}
        <div className="absolute left-[1783px] bottom-0 flex gap-[5px]">
          <div className="w-[3px] h-px bg-white" />
          <div className="w-[5px] h-px bg-white" />
          <div className="w-[2px] h-px bg-white" />
          <div className="w-[5px] h-px bg-white" />
          <div className="w-[5px] h-px bg-white" />
        </div>
      </div>
    </div>
  );
}
